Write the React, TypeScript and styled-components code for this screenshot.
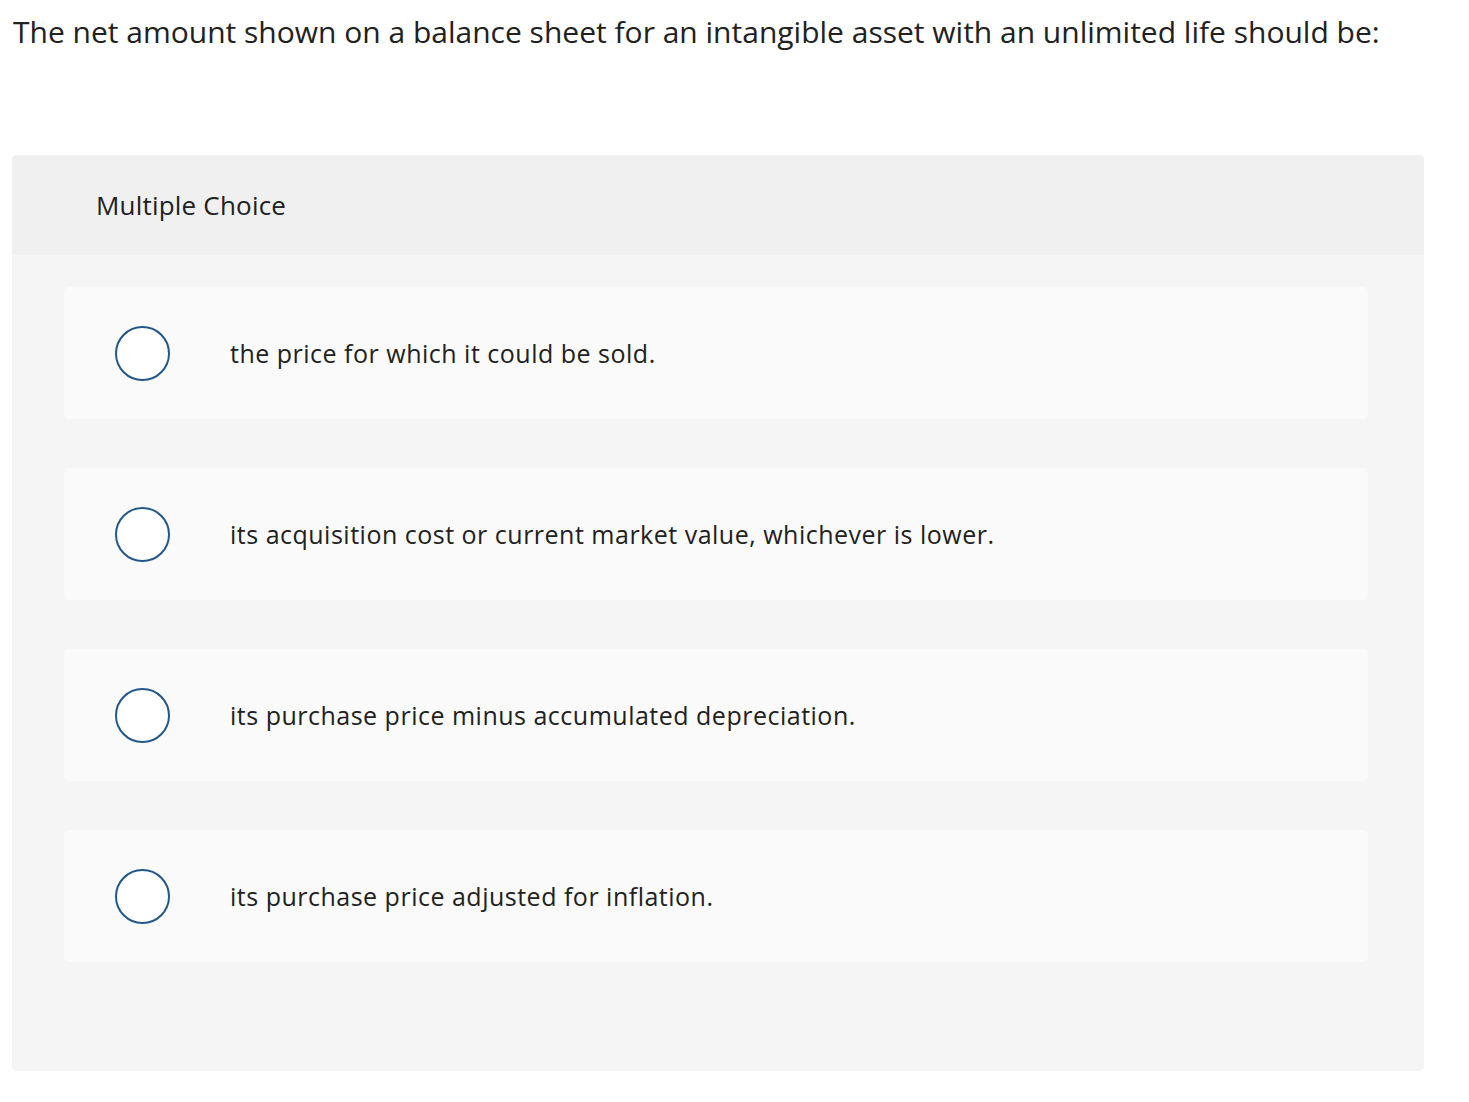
import React, { ReactElement } from "react";
import styled, { createGlobalStyle } from "styled-components";

const GlobalStyle = createGlobalStyle`
  html, body {
    margin: 0;
    padding: 0;
    background: #fff;
  }
  body {
    font-family: "Open Sans", Lato, "Liberation Sans", sans-serif;
    color: #212121;
  }
`;

const Page = styled.div`
  width: 1469px;
  padding: 12px 45px 0 12px;
  box-sizing: border-box;
`;

const Question = styled.p`
  margin: 0 0 0 1px;
  font-size: 30px;
  line-height: 40px;
  color: #212121;
`;

const Panel = styled.section`
  margin-top: 103px;
  width: 1412px;
  border-radius: 5px;
  overflow: hidden;
  background-color: #f5f5f5;
`;

const PanelHeader = styled.div`
  display: flex;
  align-items: center;
  height: 100px;
  padding-left: 84px;
  background-color: #f0f0f0;
  font-size: 26px;
  letter-spacing: 0.2px;
  color: #212121;
`;

const ChoiceList = styled.ol`
  list-style: none;
  margin: 0;
  padding: 32px 56px 109px 52px;
  display: flex;
  flex-direction: column;
  gap: 49px;
`;

const Choice = styled.li`
  display: flex;
  align-items: center;
  height: 132px;
  border-radius: 5px;
  background-color: #fafafa;
  cursor: pointer;
`;

const Radio = styled.span`
  flex: none;
  width: 51px;
  height: 51px;
  margin-left: 51px;
  border: 2px solid #22578a;
  border-radius: 50%;
  background-color: #fff;
`;

const ChoiceText = styled.span`
  margin-left: 60px;
  font-size: 25px;
  letter-spacing: 0.5px;
  color: #212121;
`;

const choices = [
  "the price for which it could be sold.",
  "its acquisition cost or current market value, whichever is lower.",
  "its purchase price minus accumulated depreciation.",
  "its purchase price adjusted for inflation."
];

const App = (): ReactElement => {
  return (
    <>
      <GlobalStyle />
      <Page>
        <Question>
          The net amount shown on a balance sheet for an intangible asset with
          an unlimited life should be:
        </Question>
        <Panel>
          <PanelHeader>Multiple Choice</PanelHeader>
          <ChoiceList>
            {choices.map((choice, index) => (
              <Choice key={index}>
                <Radio />
                <ChoiceText>{choice}</ChoiceText>
              </Choice>
            ))}
          </ChoiceList>
        </Panel>
      </Page>
    </>
  );
};

export default App;
